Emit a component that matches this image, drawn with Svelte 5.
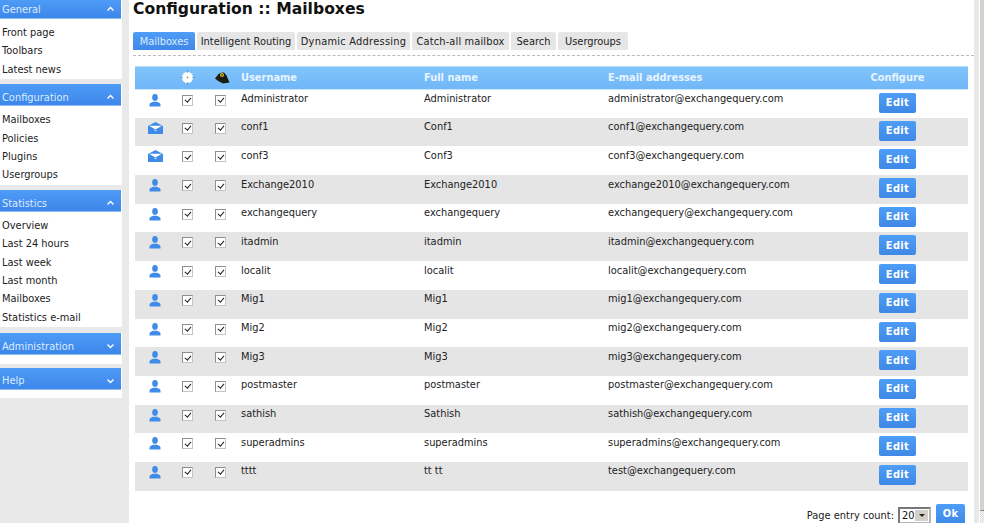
<script>
	const menus = [
		{ title: 'General', open: true, items: ['Front page', 'Toolbars', 'Latest news'] },
		{ title: 'Configuration', open: true, items: ['Mailboxes', 'Policies', 'Plugins', 'Usergroups'] },
		{
			title: 'Statistics',
			open: true,
			items: ['Overview', 'Last 24 hours', 'Last week', 'Last month', 'Mailboxes', 'Statistics e-mail']
		},
		{ title: 'Administration', open: false, items: [] },
		{ title: 'Help', open: false, items: [] }
	];

	const tabs = [
		{ label: 'Mailboxes', width: 62 },
		{ label: 'Intelligent Routing', width: 98 },
		{ label: 'Dynamic Addressing', width: 113 },
		{ label: 'Catch-all mailbox', width: 97 },
		{ label: 'Search', width: 45 },
		{ label: 'Usergroups', width: 70 }
	];

	const rows = [
		['user', 'Administrator', 'Administrator', 'administrator@exchangequery.com'],
		['box', 'conf1', 'Conf1', 'conf1@exchangequery.com'],
		['box', 'conf3', 'Conf3', 'conf3@exchangequery.com'],
		['user', 'Exchange2010', 'Exchange2010', 'exchange2010@exchangequery.com'],
		['user', 'exchangequery', 'exchangequery', 'exchangequery@exchangequery.com'],
		['user', 'itadmin', 'itadmin', 'itadmin@exchangequery.com'],
		['user', 'localit', 'localit', 'localit@exchangequery.com'],
		['user', 'Mig1', 'Mig1', 'mig1@exchangequery.com'],
		['user', 'Mig2', 'Mig2', 'mig2@exchangequery.com'],
		['user', 'Mig3', 'Mig3', 'mig3@exchangequery.com'],
		['user', 'postmaster', 'postmaster', 'postmaster@exchangequery.com'],
		['user', 'sathish', 'Sathish', 'sathish@exchangequery.com'],
		['user', 'superadmins', 'superadmins', 'superadmins@exchangequery.com'],
		['user', 'tttt', 'tt tt', 'test@exchangequery.com']
	];
</script>

<div class="page">
	<aside class="sidebar">
		{#each menus as menu}
			<section class="menu">
				<h3>
					<span>{menu.title}</span>
					<svg width="9" height="6" viewBox="0 0 9 6" class:closed={!menu.open}>
						<path d="M1.5 4.5 L4.5 1.5 L7.5 4.5" fill="none" stroke="#fff" stroke-width="1.4" />
					</svg>
				</h3>
				<ul>
					{#each menu.items as item}
						<li>{item}</li>
					{/each}
				</ul>
			</section>
		{/each}
	</aside>

	<main class="content">
		<h1>Configuration :: Mailboxes</h1>

		<nav class="tabs">
			{#each tabs as tab, i}
				<span class="tab" class:active={i === 0} style:width="{tab.width}px">{tab.label}</span>
			{/each}
		</nav>

		<table>
			<thead>
				<tr>
					<th class="c-icon"></th>
					<th class="c-check">
						<svg class="target" width="15" height="15" viewBox="0 0 15 15">
							<circle cx="7.5" cy="7.5" r="6" fill="#fff" stroke="#8fc0ee" stroke-width="1" />
							<path d="M7.5 0.5V2.5M7.5 12.5V14.5M0.5 7.5H2.5M12.5 7.5H14.5" stroke="#4f8fd0" stroke-width="1" />
							<circle cx="7.5" cy="7.5" r="1" fill="#8f9fae" />
						</svg>
					</th>
					<th class="c-check">
						<svg class="hat" width="15" height="12" viewBox="0 0 15 12">
							<path d="M0 6.5 L3.5 2 Q6 0 9 0.5 L11.5 3.5 L14.5 10.5 L8 11.5 Q3 9.5 0 6.5 Z" fill="#1c1c14" />
							<circle cx="7" cy="3" r="2" fill="#cdbb1e" />
							<circle cx="7" cy="3" r="0.8" fill="#222" />
						</svg>
					</th>
					<th class="c-text c-user">Username</th>
					<th class="c-text c-full">Full name</th>
					<th class="c-text c-mail">E-mail addresses</th>
					<th class="c-conf">Configure</th>
				</tr>
			</thead>
			<tbody>
				{#each rows as [kind, username, fullname, mail]}
					<tr>
						<td class="icon-cell">
							{#if kind === 'user'}
								<svg width="12" height="13" viewBox="0 0 12 13">
									<ellipse cx="6" cy="3.4" rx="2.8" ry="3.4" fill="#3f8be8" />
									<path d="M0.5 12.5 V10.8 Q0.5 9 4 7.8 H8 Q11.5 9 11.5 10.8 V12.5 Z" fill="#3f8be8" />
								</svg>
							{:else}
								<svg width="15" height="12" viewBox="0 0 15 12">
									<path d="M0 4 L7.5 0 L15 4 V12 H0 Z" fill="#3f8be8" />
									<path d="M1 3.8 H14 L7.5 7.5 Z" fill="#fff" />
									<path d="M6 8 H9 L7.5 9.2 Z" fill="#cfe3fb" />
								</svg>
							{/if}
						</td>
						<td class="check-cell"><span class="check"></span></td>
						<td class="check-cell"><span class="check"></span></td>
						<td class="text">{username}</td>
						<td class="text">{fullname}</td>
						<td class="text">{mail}</td>
						<td class="conf-cell"><button class="btn">Edit</button></td>
					</tr>
				{/each}
			</tbody>
		</table>

		<footer class="pager">
			<span>Page entry count:</span>
			<span class="select">
				<span class="value">20</span>
				<span class="arrow"></span>
			</span>
			<button class="btn ok">Ok</button>
		</footer>
	</main>

	<div class="scroll-edge">
		<div class="thumb"></div>
		<div class="track"></div>
	</div>
</div>

<style>
	:global(body) {
		background: #fff;
		font-family: 'DejaVu Sans', Verdana, sans-serif;
		font-size: 9.85px;
		color: #222;
	}

	.page {
		display: flex;
		width: 997px;
		height: 523px;
		overflow: hidden;
	}

	.sidebar {
		flex: none;
		width: 122px;
		padding-right: 7px;
		background: #e9e9e9;
	}

	.menu {
		background: #fff;
		margin-bottom: 5px;
	}

	.menu:nth-child(3) {
		margin-bottom: 6px;
	}

	.menu:nth-child(4) {
		margin-bottom: 4px;
	}

	.menu h3 {
		display: flex;
		align-items: center;
		justify-content: space-between;
		height: 16px;
		margin: 0 1px 0 0;
		padding: 5px 6px 0 2px;
		background: linear-gradient(#4d9cf6, #3d86ea);
		border-bottom: 1px solid #8fbdf2;
		color: #dcebff;
		font-size: 9.85px;
		font-weight: normal;
	}

	.menu:first-child h3 {
		height: 18px;
		padding-top: 0;
	}

	.menu h3 svg.closed {
		transform: scaleY(-1);
	}

	.menu ul {
		list-style: none;
		margin: 0;
		padding: 5px 0 0.5px 2px;
		min-height: 1px;
	}

	.menu:nth-child(n + 4) ul {
		min-height: 3px;
	}

	.menu li {
		height: 18.3px;
		line-height: 18.3px;
	}

	.content {
		flex: none;
		width: 845px;
		padding-left: 4px;
		box-sizing: border-box;
	}

	h1 {
		margin: 0;
		height: 32px;
		line-height: 18px;
		font-size: 15.6px;
		font-weight: bold;
		color: #111;
	}

	.tabs {
		display: flex;
		gap: 2px;
		height: 23px;
		border-bottom: 1px dashed #bbb;
	}

	.tab {
		box-sizing: border-box;
		height: 18px;
		line-height: 19px;
		text-align: center;
		background: #e6e6e6;
		border-radius: 2px 2px 0 0;
	}

	.tab:nth-child(3) {
		letter-spacing: 0.25px;
	}

	.tab:nth-child(4) {
		letter-spacing: 0.15px;
	}

	.tab.active {
		background: linear-gradient(#4f9df7, #3f87e8);
		color: #dcebff;
	}

	table {
		width: 833px;
		margin: 10px 0 0 2px;
		border-collapse: collapse;
		table-layout: fixed;
	}

	thead tr {
		height: 22.5px;
		background: linear-gradient(#80c4fb, #70b6f8);
	}

	th {
		box-sizing: border-box;
		padding: 0;
		border-top: 1px solid #b5dcfc;
		border-bottom: 1px solid #cde6fd;
		color: #e8f4ff;
		font-weight: bold;
		text-align: left;
		font-size: 9.85px;
	}

	th svg {
		display: block;
	}

	.target {
		margin-left: 9px;
	}

	.hat {
		margin: 1px 0 0 11px;
	}

	tbody tr {
		height: 28.7px;
	}

	tbody tr:nth-child(even) {
		background: #e5e5e5;
	}

	.c-icon {
		width: 36px;
	}

	.c-check {
		width: 33px;
	}

	.c-user {
		width: 183px;
	}

	.c-full {
		width: 184px;
	}

	.c-mail {
		width: 245px;
	}

	.c-text {
		padding-left: 4px;
	}

	th.c-conf {
		text-align: center;
		padding-right: 22px;
	}

	td {
		padding: 0;
		vertical-align: top;
	}

	.text {
		padding: 3.5px 0 0 4px;
	}

	.icon-cell {
		padding: 4px 0 0 4px;
	}

	.icon-cell svg {
		display: block;
		margin: 0 auto;
	}

	.check-cell {
		padding-top: 5px;
		text-align: center;
		line-height: 0;
	}

	.check {
		display: inline-block;
		position: relative;
		box-sizing: border-box;
		width: 11px;
		height: 11px;
		background: #fff;
		border: 1px solid #8f8f8f;
		border-right-color: #c4c4c4;
		border-bottom-color: #c4c4c4;
	}

	.check::after {
		content: '';
		position: absolute;
		left: 2.5px;
		top: 0.5px;
		width: 2.5px;
		height: 5px;
		border: solid #222;
		border-width: 0 1.4px 1.4px 0;
		transform: rotate(40deg);
	}

	.conf-cell {
		padding: 3px 22px 0 0;
		text-align: center;
	}

	.btn {
		display: inline-block;
		vertical-align: top;
		width: 37px;
		height: 20px;
		padding: 0;
		border: none;
		border-radius: 2px;
		background: linear-gradient(#4d9ef8, #3f88e6);
		color: #fff;
		font-family: inherit;
		font-size: 9.85px;
		font-weight: bold;
		letter-spacing: 0.4px;
	}

	.pager {
		display: flex;
		justify-content: flex-end;
		align-items: center;
		gap: 4px;
		width: 832px;
		margin-top: 13px;
	}

	.pager > span:first-child {
		padding-top: 4px;
	}

	.select {
		display: inline-flex;
		align-items: center;
		justify-content: space-between;
		box-sizing: border-box;
		width: 33px;
		height: 17px;
		margin-top: 3px;
		padding: 1px;
		background: #fff;
		border: 2px solid #777;
		border-right-color: #b5b5b5;
		border-bottom-color: #b5b5b5;
	}

	.value {
		padding-left: 1px;
		color: #111;
	}

	.arrow {
		position: relative;
		width: 13px;
		height: 11px;
		background: #d4d0c8;
	}

	.arrow::after {
		content: '';
		position: absolute;
		left: 4px;
		top: 4px;
		border: 3px solid transparent;
		border-top-color: #222;
		border-bottom: 0;
	}

	.ok {
		width: 29px;
		margin-left: 1px;
	}

	.scroll-edge {
		flex: none;
		display: flex;
		flex-direction: column;
		align-items: flex-end;
		width: 10px;
		background: linear-gradient(to right, #e9e9e9 0 5px, #fff 5px 6px, transparent 6px);
	}

	.thumb {
		flex: none;
		width: 4px;
		height: 510px;
		background: #d6d2cc;
		border-bottom: 1px solid #8a8a8a;
	}

	.track {
		flex: 1;
		width: 4px;
		background: repeating-conic-gradient(#d6d2cc 0 25%, #fff 0 50%) 0 0 / 2px 2px;
	}
</style>
